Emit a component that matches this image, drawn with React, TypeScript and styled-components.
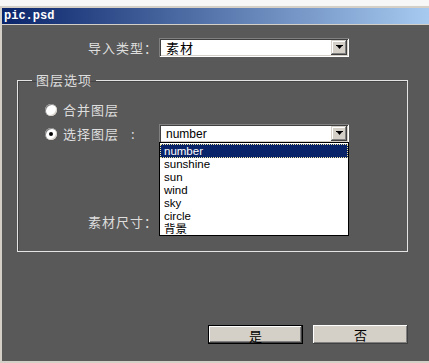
import styled, { createGlobalStyle } from 'styled-components';

const GlobalStyle = createGlobalStyle`
  html, body {
    margin: 0;
    padding: 0;
    background: #404040;
  }
  * {
    box-sizing: border-box;
  }
`;

const cjk = `"Noto Sans CJK SC", "DejaVu Sans", sans-serif`;

const Screen = styled.div`
  display: flex;
  flex-direction: column;
  width: 429px;
  height: 363px;
  overflow: hidden;
`;

const TopStrip = styled.div`
  height: 8px;
  background: #f7f7f7;
  border-bottom: 2px solid #d4d0c8;
`;

const Window = styled.div`
  display: flex;
  flex-direction: column;
  flex: 1;
  border-left: 2px solid #d4d0c8;
  border-bottom: 2px solid #d4d0c8;
`;

const TitleBar = styled.div`
  display: flex;
  align-items: center;
  height: 17px;
  padding-left: 2px;
  background: linear-gradient(to right, #0a246a, #a6caf0);
  border-bottom: 1px solid #d4d0c8;
  color: #fff;
  font-family: "Liberation Mono", monospace;
  font-weight: bold;
  font-size: 12px;
`;

const Body = styled.div`
  flex: 1;
  background: #595959;
  padding-top: 13px;
  display: flex;
  flex-direction: column;
  font-family: ${cjk};
  font-size: 13px;
  color: #dedede;
`;

const FormRow = styled.div<{ $labelWidth: number }>`
  display: grid;
  grid-template-columns: ${(p) => p.$labelWidth}px 190px;
  align-items: center;
  height: 19px;
`;

const Label = styled.span`
  text-align: right;
  letter-spacing: 1px;
  line-height: 19px;
  padding-right: 1px;
`;

const Combo = styled.div`
  position: relative;
  display: flex;
  align-items: center;
  height: 19px;
  padding: 0 2px 0 7px;
  background: #fff;
  color: #000;
  box-shadow: inset 1px 1px #808080, inset -1px -1px #fff, inset 2px 2px #404040,
    inset -2px -2px #d4d0c8;
`;

const ComboText = styled.span<{ $latin?: boolean }>`
  flex: 1;
  font-family: ${(p) => (p.$latin ? `"Liberation Sans", sans-serif` : cjk)};
  font-size: ${(p) => (p.$latin ? '12px' : '13px')};
  letter-spacing: ${(p) => (p.$latin ? '0' : '1px')};
`;

const ArrowButton = styled.span`
  display: flex;
  align-items: center;
  justify-content: center;
  width: 16px;
  height: 15px;
  background: #d4d0c8;
  box-shadow: inset -1px -1px #404040, inset 1px 1px #d4d0c8, inset -2px -2px #808080,
    inset 2px 2px #fff;
`;

const Group = styled.fieldset`
  margin: 15px 0 0 15px;
  width: 391px;
  height: 180px;
  padding: 12px 0 0 0;
  border: 1px solid #e4e4e4;
  box-shadow: inset 1px 1px #454545;
  position: relative;
  display: flex;
  flex-direction: column;
`;

const Legend = styled.legend`
  margin-left: 14px;
  padding: 0 4px;
  letter-spacing: 1px;
  line-height: 16px;
`;

const RadioRow = styled.div`
  display: flex;
  align-items: center;
  height: 19px;
  padding-left: 27px;
  margin-bottom: 5px;
`;

const RadioCell = styled.div`
  display: flex;
  align-items: center;
  padding-left: 27px;
`;

const Radio = styled.span<{ $checked?: boolean }>`
  display: inline-flex;
  align-items: center;
  justify-content: center;
  width: 12px;
  height: 12px;
  border-radius: 50%;
  background: #fff;
  box-shadow: inset 1px 1px #808080, inset -1px -1px #d4d0c8;
  margin-right: 6px;
  &::after {
    content: '';
    width: 4px;
    height: 4px;
    border-radius: 50%;
    background: ${(p) => (p.$checked ? '#000' : 'transparent')};
  }
`;

const RadioText = styled.span`
  letter-spacing: 1px;
`;

const Colon = styled.span`
  margin-left: 12px;
`;

const SizeRow = styled(FormRow)`
  margin-top: 69px;
`;

const DropList = styled.ul`
  position: absolute;
  left: 141px;
  top: 54px;
  width: 190px;
  height: 94px;
  margin: 0;
  padding: 1px 0 0 0;
  list-style: none;
  background: #fff;
  border: 1px solid #000;
  overflow: hidden;
  z-index: 2;
`;

const DropItem = styled.li<{ $active?: boolean }>`
  height: 13px;
  line-height: 13px;
  padding-left: 4px;
  font-family: "Liberation Sans", ${cjk};
  font-size: 11.5px;
  color: ${(p) => (p.$active ? '#fff' : '#000')};
  background: ${(p) => (p.$active ? '#0a246a' : 'transparent')};
  outline: ${(p) => (p.$active ? '1px dotted #f0e8a0' : 'none')};
  outline-offset: -1px;
  &:first-child {
    height: 14px;
    line-height: 14px;
  }
`;

const ButtonBar = styled.div`
  display: flex;
  justify-content: flex-end;
  gap: 10px;
  margin-top: auto;
  margin-bottom: 17px;
  padding-right: 21px;
`;

const Button = styled.button<{ $default?: boolean }>`
  width: 95px;
  height: 19px;
  padding: 0;
  background: #d4d0c8;
  border: ${(p) => (p.$default ? '1px solid #000' : 'none')};
  box-shadow: inset -1px -1px #404040, inset 1px 1px #fff, inset -2px -2px #808080;
  font-family: ${cjk};
  font-size: 13px;
  color: #000;
`;

function DownArrow() {
  return (
    <svg width="7" height="5" viewBox="0 0 7 5">
      <rect x="0" y="0" width="7" height="1" fill="#000" />
      <path d="M1 1 H6 L3.5 4 Z" fill="#000" />
    </svg>
  );
}

const layers = ['number', 'sunshine', 'sun', 'wind', 'sky', 'circle', '背景'];

export default function App() {
  return (
    <>
      <GlobalStyle />
      <Screen>
        <TopStrip />
        <Window>
          <TitleBar>pic.psd</TitleBar>
          <Body>
            <FormRow $labelWidth={157}>
              <Label>导入类型：</Label>
              <Combo>
                <ComboText>素材</ComboText>
                <ArrowButton>
                  <DownArrow />
                </ArrowButton>
              </Combo>
            </FormRow>

            <Group>
              <Legend>图层选项</Legend>
              <RadioRow>
                <Radio />
                <RadioText>合并图层</RadioText>
              </RadioRow>
              <FormRow $labelWidth={141}>
                <RadioCell>
                  <Radio $checked />
                  <RadioText>选择图层</RadioText>
                  <Colon>:</Colon>
                </RadioCell>
                <Combo>
                  <ComboText $latin>number</ComboText>
                  <ArrowButton>
                    <DownArrow />
                  </ArrowButton>
                </Combo>
              </FormRow>
              <SizeRow $labelWidth={141}>
                <Label>素材尺寸：</Label>
                <Combo />
              </SizeRow>
              <DropList>
                {layers.map((name, i) => (
                  <DropItem key={name} $active={i === 0}>
                    {name}
                  </DropItem>
                ))}
              </DropList>
            </Group>

            <ButtonBar>
              <Button $default>是</Button>
              <Button>否</Button>
            </ButtonBar>
          </Body>
        </Window>
      </Screen>
    </>
  );
}
